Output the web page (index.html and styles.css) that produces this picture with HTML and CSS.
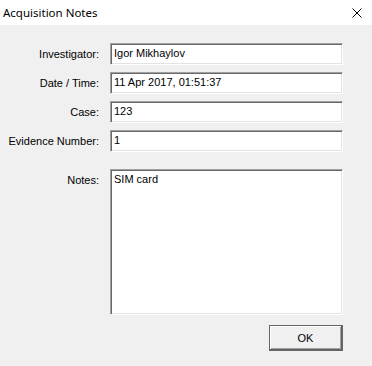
FILE: index.html
```html
<!DOCTYPE html>
<html lang="en">
<head>
  <meta charset="UTF-8">
  <title>Acquisition Notes</title>
  <link rel="stylesheet" href="styles.css">
</head>
<body>
  <div class="window">
    <!-- Title bar -->
    <div class="titlebar">
      <span class="title">Acquisition Notes</span>
      <svg class="close" width="10" height="10" viewBox="0 0 10 10">
        <path d="M0.5 0.5 L9.5 9.5 M9.5 0.5 L0.5 9.5" stroke="#000" stroke-width="1" fill="none"/>
      </svg>
    </div>

    <!-- Form -->
    <div class="content">
      <div class="form">
        <label class="label">Investigator:</label>
        <div class="field">Igor Mikhaylov</div>

        <label class="label">Date / Time:</label>
        <div class="field">11 Apr 2017, 01:51:37</div>

        <label class="label">Case:</label>
        <div class="field">123</div>

        <label class="label">Evidence Number:</label>
        <div class="field">1</div>

        <label class="label notes-label">Notes:</label>
        <div class="field notes">SIM card</div>
      </div>

      <div class="actions">
        <button class="ok">OK</button>
      </div>
    </div>
  </div>
</body>
</html>
```

FILE: styles.css
```css
body {
  margin: 0;
  padding: 0;
  background: #f0f0f0;
  font-family: "Liberation Sans", Arial, sans-serif;
  font-size: 11px;
  color: #000;
}
.window {
  width: 372px;
  height: 366px;
  background: #f0f0f0;
}
.titlebar {
  height: 25px;
  background: #fff;
  display: flex;
  align-items: center;
  justify-content: space-between;
  padding: 0 10px 0 3px;
}
.title {
  font-family: "Noto Sans", "Open Sans", sans-serif;
  font-size: 11.5px;
  color: #000;
}
.close {
  display: block;
}
.content {
  padding: 18px 0 0 0;
}
.form {
  display: grid;
  grid-template-columns: 99px 233px;
  column-gap: 11px;
  row-gap: 7px;
  align-items: center;
}
.label {
  text-align: right;
  white-space: nowrap;
}
.field {
  height: 22px;
  box-sizing: border-box;
  background: #fff;
  border-top: 1px solid #a0a0a0;
  border-left: 1px solid #a0a0a0;
  border-right: 1px solid #fff;
  border-bottom: 1px solid #fff;
  box-shadow: inset 1px 1px 0 #696969, inset -1px -1px 0 #e3e3e3;
  padding: 3px 3px 0 3px;
  white-space: nowrap;
}
.notes-label {
  align-self: start;
  padding-top: 5px;
}
.notes {
  height: 146px;
  margin-top: 10px;
  padding-top: 3px;
}
.notes-label {
  margin-top: 10px;
}
.actions {
  display: flex;
  justify-content: flex-end;
  width: 343px;
  margin-top: 10px;
}
.ok {
  width: 74px;
  height: 26px;
  box-sizing: border-box;
  background: #f0f0f0;
  border: 1px solid #646464;
  border-right-width: 2px;
  border-bottom-width: 2px;
  box-shadow: inset 1px 1px 0 #fff, inset -1px -1px 0 #a0a0a0;
  font-family: "Liberation Sans", Arial, sans-serif;
  font-size: 11px;
  color: #000;
  padding: 0;
}
```
